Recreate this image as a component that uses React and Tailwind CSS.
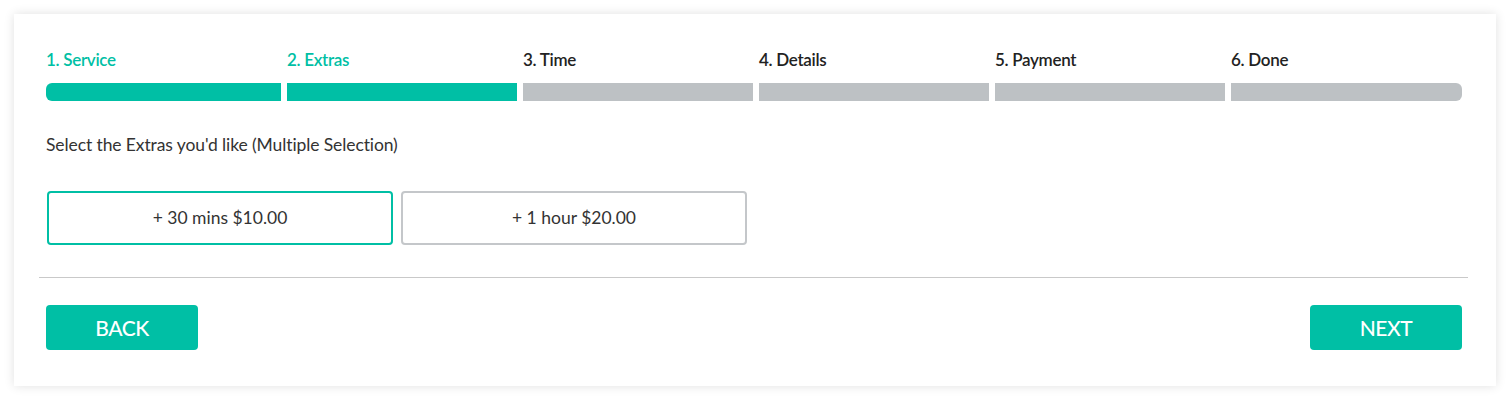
import React from "react";

const steps = ["1. Service", "2. Extras", "3. Time", "4. Details", "5. Payment", "6. Done"];

export default function App() {
  return (
    <div className="min-h-[400px] w-[1510px] bg-white pt-[14px] pl-[14px]" style={{ fontFamily: "Lato, 'Noto Sans', sans-serif" }}>
      <div className="w-[1482px] h-[372px] bg-white shadow-[0_0_10px_rgba(0,0,0,0.12)] pt-[34px] pl-[25px] pr-[28px]">
        <div className="pl-[7px] pr-[6px]">
          <div className="grid grid-cols-[235fr_230fr_230fr_230fr_230fr_231fr] gap-[6px]">
            {steps.map((s, i) => (
              <div key={s} className="flex flex-col">
                <div className={`text-[17px] leading-[24px] font-semibold tracking-[-0.3px] ${i < 2 ? "text-[#00bfa5]" : "text-[#222]"}`}>{s}</div>
                <div className={`mt-[11px] h-[18px] ${i < 2 ? "bg-[#00bfa5]" : "bg-[#bdc1c4]"} ${i === 0 ? "rounded-l-[6px]" : ""} ${i === 5 ? "rounded-r-[6px]" : ""}`} />
              </div>
            ))}
          </div>
          <div className="mt-[33px] text-[17.5px] leading-[22px] text-[#333] tracking-[-0.1px]">Select the Extras you'd like (Multiple Selection)</div>
          <div className="mt-[35px] flex gap-[8px] pl-[1px]">
            <div className="w-[346px] h-[54px] border-2 border-[#00bfa5] rounded-[4px] flex items-center justify-center text-[17.5px] text-[#333]">+ 30 mins $10.00</div>
            <div className="w-[346px] h-[54px] border-2 border-[#c4c7ca] rounded-[4px] flex items-center justify-center text-[17.5px] text-[#333]">+ 1 hour $20.00</div>
          </div>
        </div>
        <div className="mt-[32px] h-[1px] bg-[#c9c9c9]" />
        <div className="mt-[27px] pl-[7px] pr-[6px] flex justify-between">
          <button className="w-[152px] h-[45px] bg-[#00bfa5] rounded-[4px] text-white text-[21px] font-medium tracking-[-0.5px]">BACK</button>
          <button className="w-[152px] h-[45px] bg-[#00bfa5] rounded-[4px] text-white text-[21px] font-medium tracking-[-0.5px]">NEXT</button>
        </div>
      </div>
    </div>
  );
}
